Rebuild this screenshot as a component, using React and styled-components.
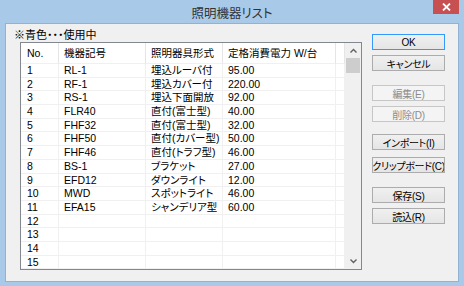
import React from "react";
import styled, { createGlobalStyle } from "styled-components";

const GlobalStyle = createGlobalStyle`
  html, body {
    margin: 0;
    padding: 0;
    background: #fff;
  }
  body {
    font-family: "Liberation Sans", "Noto Sans CJK JP", sans-serif;
    font-feature-settings: "palt";
  }
`;

const Window = styled.div`
  width: 464px;
  height: 286px;
  background: #a8c9e8;
  display: flex;
  flex-direction: column;
  box-sizing: border-box;
  padding: 0 5px 4px 5px;
`;

const TitleBar = styled.div`
  height: 23px;
  display: grid;
  grid-template-columns: 1fr auto 1fr;
  align-items: center;
  margin: 0 -5px;
`;

const Title = styled.div`
  grid-column: 2;
  font-family: "Noto Sans CJK JP", sans-serif;
  font-size: 12.5px;
  color: #333;
  padding-top: 1px;
`;

const CloseButton = styled.div`
  grid-column: 3;
  justify-self: end;
  align-self: start;
  width: 26px;
  height: 14px;
  margin-right: 5px;
  background: #c75050;
  display: flex;
  align-items: center;
  justify-content: center;
`;

const Body = styled.div`
  flex: 1;
  background: #f0f0f0;
  border: 1px solid #93b2d2;
  display: flex;
  padding: 0 13px 0 8px;
  min-height: 0;
`;

const LeftPane = styled.div`
  display: flex;
  flex-direction: column;
`;

const Note = styled.div`
  font-family: "Noto Sans CJK JP", sans-serif;
  font-size: 11px;
  line-height: 14px;
  color: #000;
  margin-top: 3px;
`;

const ListView = styled.div`
  margin: 1px 0 0 6px;
  width: 342px;
  height: 228px;
  box-sizing: border-box;
  border: 1px solid #828790;
  background: #fff;
  display: flex;
  overflow: hidden;
`;

const Grid = styled.div`
  flex: 1;
  display: flex;
  flex-direction: column;
`;

const Row = styled.div`
  display: grid;
  grid-template-columns: 38px 87px 77px 113px 1fr;
  height: ${(p) => (p.$header ? "21px" : "13.7px")};
  flex-shrink: 0;
`;

const Cell = styled.div`
  box-sizing: border-box;
  border-right: 1px solid ${(p) => (p.$header ? "#e5e5e5" : "#f0f0f0")};
  border-bottom: 1px solid #f0f0f0;
  padding-left: ${(p) => (p.$pad ? p.$pad : 5)}px;
  font-size: 10.5px;
  line-height: ${(p) => (p.$header ? "20px" : "13px")};
  color: #000;
  white-space: nowrap;
  overflow: hidden;
`;

const Scrollbar = styled.div`
  width: 16px;
  background: #f0f0f0;
  display: flex;
  flex-direction: column;
  align-items: center;
`;

const ArrowBox = styled.div`
  height: 15px;
  width: 100%;
  display: flex;
  align-items: center;
  justify-content: center;
`;

const Thumb = styled.div`
  width: 14px;
  height: 15px;
  background: #cdcdcd;
`;

const Track = styled.div`
  flex: 1;
`;

const ButtonColumn = styled.div`
  margin-left: 10px;
  display: flex;
  flex-direction: column;
`;

const Button = styled.div`
  width: 73px;
  height: 16px;
  box-sizing: border-box;
  margin-top: ${(p) => p.$gap}px;
  border: 1px solid ${(p) => (p.$default ? "#3399ff" : p.$disabled ? "#c6c6c6" : "#acacac")};
  background: ${(p) =>
    p.$disabled ? "#f4f4f4" : "linear-gradient(#f0f0f0, #e5e5e5)"};
  color: ${(p) => (p.$disabled ? "#8c8c8c" : "#000")};
  font-family: "Liberation Sans", "Noto Sans CJK JP", sans-serif;
  font-size: 10px;
  letter-spacing: -0.3px;
  display: flex;
  align-items: center;
  justify-content: center;
  white-space: nowrap;
  overflow: hidden;
`;

const rows = [
  ["1", "RL-1", "埋込ルーバ付", "95.00"],
  ["2", "RF-1", "埋込カバー付", "220.00"],
  ["3", "RS-1", "埋込下面開放", "92.00"],
  ["4", "FLR40", "直付(富士型)", "40.00"],
  ["5", "FHF32", "直付(富士型)", "32.00"],
  ["6", "FHF50", "直付(カバー型)", "50.00"],
  ["7", "FHF46", "直付(トラフ型)", "46.00"],
  ["8", "BS-1", "ブラケット", "27.00"],
  ["9", "EFD12", "ダウンライト", "12.00"],
  ["10", "MWD", "スポットライト", "46.00"],
  ["11", "EFA15", "シャンデリア型", "60.00"],
  ["12", "", "", ""],
  ["13", "", "", ""],
  ["14", "", "", ""],
  ["15", "", "", ""],
];

const buttons = [
  { label: "OK", gap: 10, def: true },
  { label: "キャンセル", gap: 5 },
  { label: "編集(E)", gap: 14, disabled: true },
  { label: "削除(D)", gap: 5, disabled: true },
  { label: "インポート(I)", gap: 12 },
  { label: "クリップボード(C)", gap: 7 },
  { label: "保存(S)", gap: 14 },
  { label: "読込(R)", gap: 5 },
];

const Chevron = ({ up }) => (
  <svg width="7" height="5" viewBox="0 0 7 5">
    <path
      d={up ? "M0.5 4.5 L3.5 1.5 L6.5 4.5" : "M0.5 0.5 L3.5 3.5 L6.5 0.5"}
      fill="none"
      stroke="#606060"
      strokeWidth="1.4"
    />
  </svg>
);

const App = () => {
  return (
    <>
      <GlobalStyle />
      <Window>
        <TitleBar>
          <Title>照明機器リスト</Title>
          <CloseButton>
            <svg width="9" height="8" viewBox="0 0 9 8">
              <path d="M1 0.5 L8 7.5 M8 0.5 L1 7.5" stroke="#fff" strokeWidth="1.8" />
            </svg>
          </CloseButton>
        </TitleBar>
        <Body>
          <LeftPane>
            <Note>※青色・・・使用中</Note>
            <ListView>
              <Grid>
                <Row $header>
                  <Cell $header $pad={6}>No.</Cell>
                  <Cell $header>機器記号</Cell>
                  <Cell $header>照明器具形式</Cell>
                  <Cell $header>定格消費電力 W/台</Cell>
                  <Cell $header />
                </Row>
                {rows.map((r) => (
                  <Row key={r[0]}>
                    <Cell $pad={6}>{r[0]}</Cell>
                    <Cell>{r[1]}</Cell>
                    <Cell>{r[2]}</Cell>
                    <Cell>{r[3]}</Cell>
                    <Cell />
                  </Row>
                ))}
              </Grid>
              <Scrollbar>
                <ArrowBox>
                  <Chevron up />
                </ArrowBox>
                <Thumb />
                <Track />
                <ArrowBox>
                  <Chevron />
                </ArrowBox>
              </Scrollbar>
            </ListView>
          </LeftPane>
          <ButtonColumn>
            {buttons.map((b) => (
              <Button key={b.label} $gap={b.gap} $default={b.def} $disabled={b.disabled}>
                {b.label}
              </Button>
            ))}
          </ButtonColumn>
        </Body>
      </Window>
    </>
  );
};

export default App;
